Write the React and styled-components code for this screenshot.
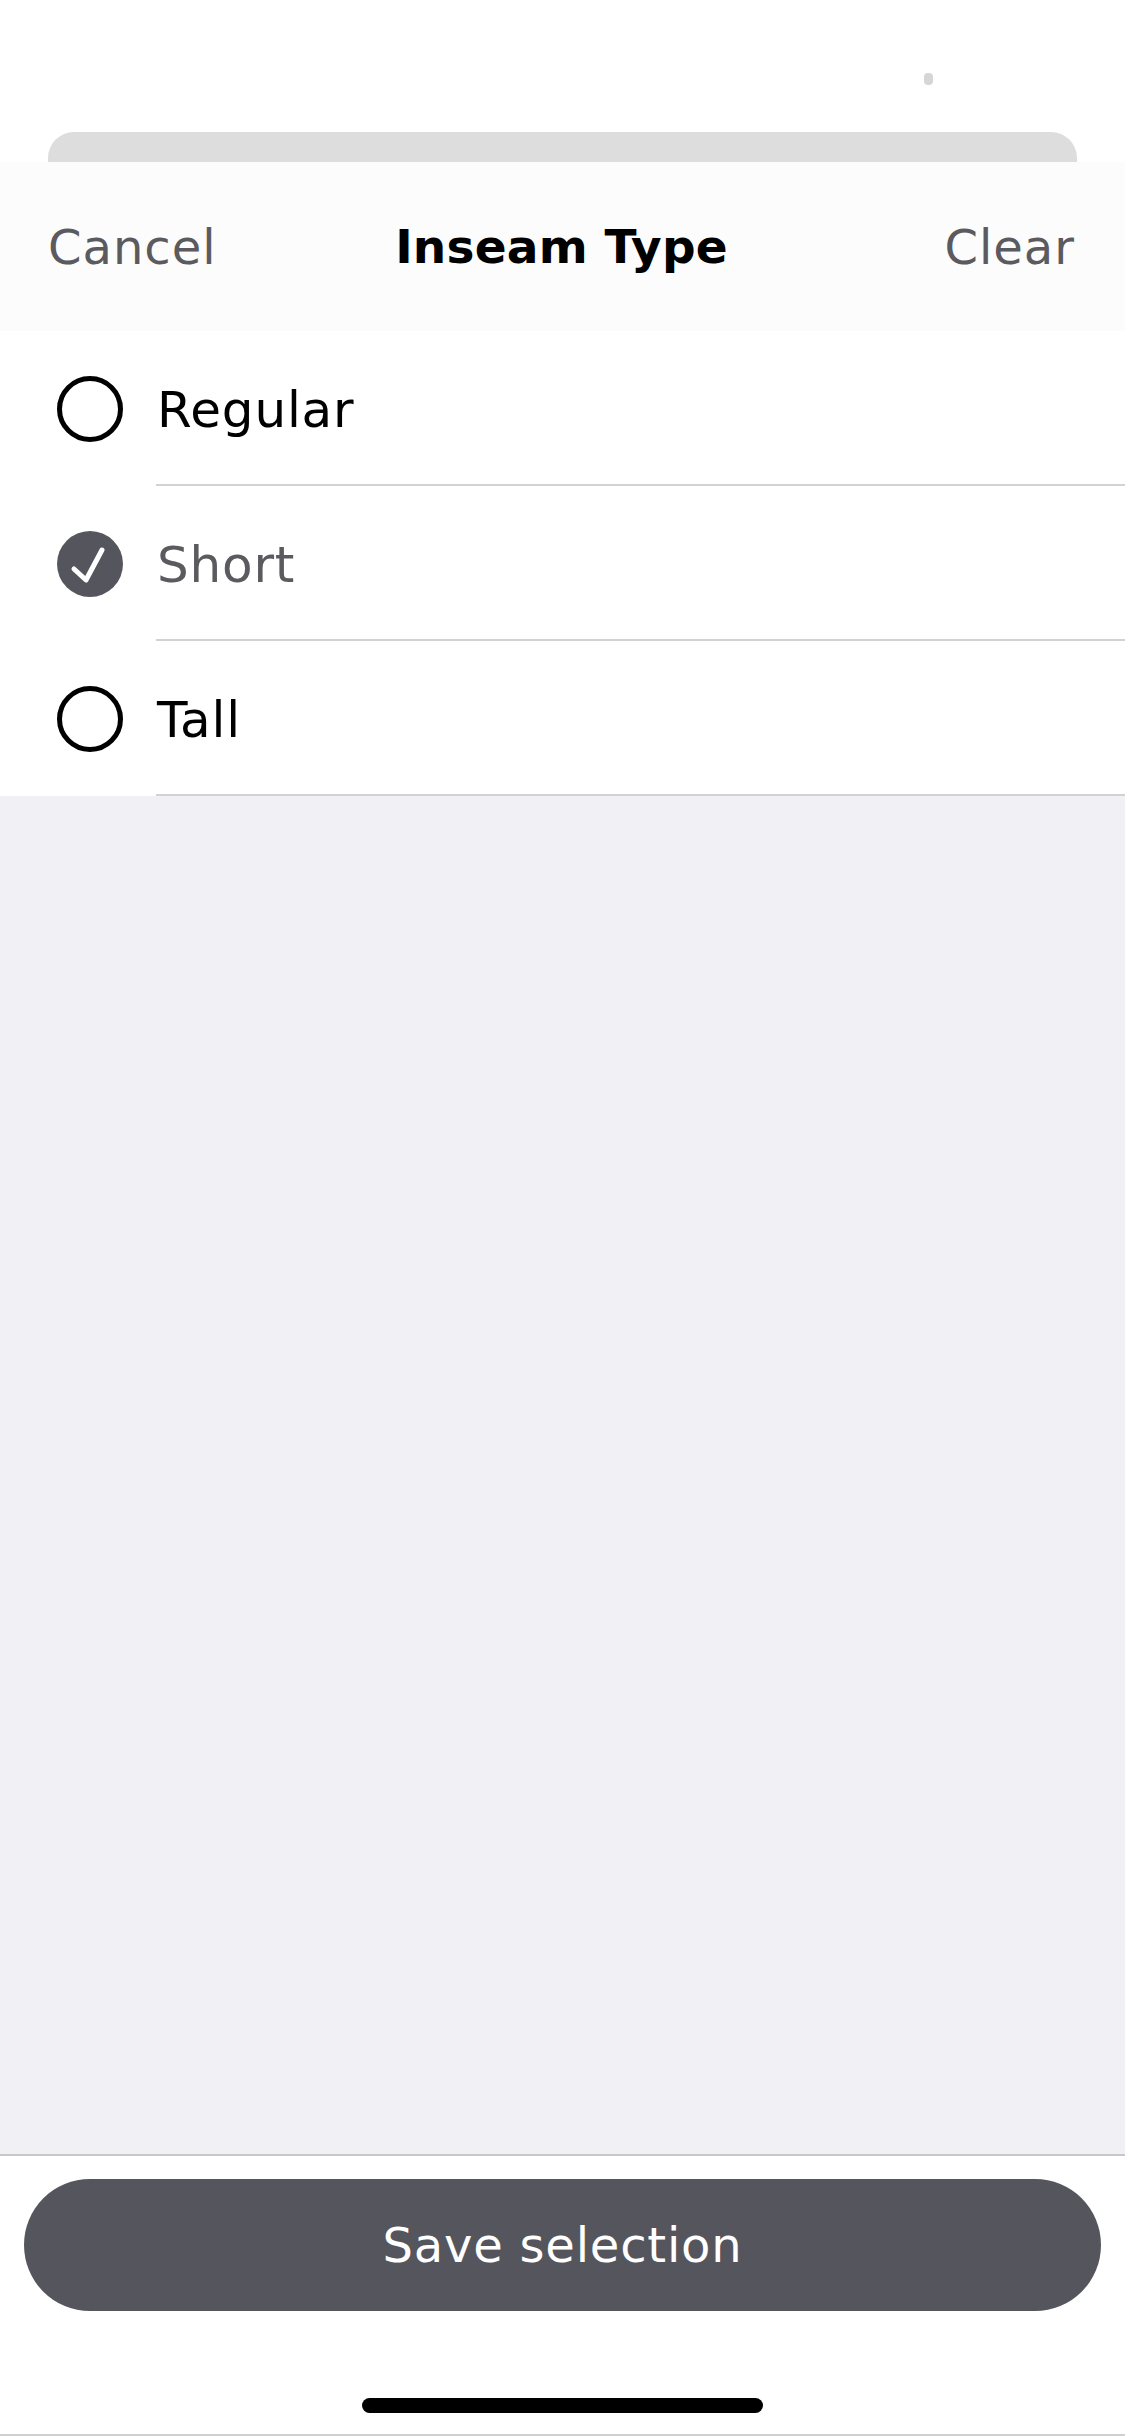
import React, { useState } from 'react';
import styled, { createGlobalStyle } from 'styled-components';

const GlobalStyle = createGlobalStyle`
  html, body {
    margin: 0;
    padding: 0;
    background: #ffffff;
  }
  #root {
    height: 2436px;
  }
`;

const Screen = styled.div`
  width: 1125px;
  height: 2436px;
  display: flex;
  flex-direction: column;
  background: #ffffff;
  font-family: 'DejaVu Sans', 'Noto Sans', sans-serif;
  overflow: hidden;
`;

const StatusBar = styled.div`
  height: 132px;
  box-sizing: border-box;
  display: flex;
  justify-content: flex-end;
  align-items: flex-start;
  padding: 73px 192px 0 0;
`;

const Dot = styled.div`
  width: 9px;
  height: 12px;
  border-radius: 4px;
  background: #d6d6d6;
`;

const PeekCard = styled.div`
  height: 30px;
  margin: 0 48px;
  background: #dddddd;
  border-radius: 26px 26px 0 0;
`;

const Header = styled.div`
  height: 169px;
  box-sizing: border-box;
  padding: 0 50px 0 48px;
  display: flex;
  align-items: center;
  justify-content: space-between;
  background: #fcfcfc;
`;

const HeaderAction = styled.button`
  border: none;
  background: none;
  padding: 0;
  font-family: inherit;
  font-size: 48px;
  letter-spacing: 1px;
  color: #5a5a5f;
  width: 220px;
  text-align: ${p => (p.$right ? 'right' : 'left')};
`;

const Title = styled.div`
  font-size: 47px;
  font-weight: bold;
  color: #000000;
  letter-spacing: 0.2px;
`;

const List = styled.div`
  background: #ffffff;
`;

const Row = styled.div`
  height: 155px;
  display: flex;
  align-items: center;
`;

const RadioCell = styled.div`
  width: 156px;
  height: 100%;
  box-sizing: border-box;
  padding-left: 57px;
  display: flex;
  align-items: center;
`;

const Label = styled.div`
  flex: 1;
  height: 100%;
  display: flex;
  align-items: center;
  box-sizing: border-box;
  padding: 4px 0 0 1px;
  border-bottom: 2px solid #d2d2d4;
  font-size: 50px;
  letter-spacing: 0.8px;
  color: ${p => (p.$checked ? '#5a5a5f' : '#000000')};
`;

const Filler = styled.div`
  flex: 1;
  background: #f0f0f5;
`;

const Footer = styled.div`
  height: 282px;
  box-sizing: border-box;
  border-top: 2px solid #c8c8cb;
  border-bottom: 2px solid #d0d0d0;
  background: #ffffff;
  display: flex;
  flex-direction: column;
  align-items: center;
  padding: 23px 24px 0;
`;

const SaveButton = styled.button`
  width: 100%;
  height: 132px;
  border: none;
  border-radius: 66px;
  background: #55555d;
  color: #ffffff;
  font-family: inherit;
  font-size: 48px;
  letter-spacing: 0.8px;
  padding: 0;
`;

const HomeIndicator = styled.div`
  width: 401px;
  height: 15px;
  margin-top: 87px;
  border-radius: 8px;
  background: #000000;
`;

const Radio = ({ checked }) =>
  checked ? (
    <svg width="66" height="66" viewBox="0 0 66 66">
      <circle cx="33" cy="33" r="33" fill="#55555d" />
      <path d="M17 38 L29 49 L45 19" fill="none" stroke="#ffffff" strokeWidth="5" strokeLinecap="round" strokeLinejoin="round" />
    </svg>
  ) : (
    <svg width="66" height="66" viewBox="0 0 66 66">
      <circle cx="33" cy="33" r="30.5" fill="none" stroke="#000000" strokeWidth="5" />
    </svg>
  );

const options = ['Regular', 'Short', 'Tall'];

export default function App() {
  const [selected, setSelected] = useState('Short');

  return (
    <>
      <GlobalStyle />
      <Screen>
        <StatusBar>
          <Dot />
        </StatusBar>
        <PeekCard />
        <Header>
          <HeaderAction>Cancel</HeaderAction>
          <Title>Inseam Type</Title>
          <HeaderAction $right onClick={() => setSelected(null)}>Clear</HeaderAction>
        </Header>
        <List>
          {options.map(o => (
            <Row key={o} onClick={() => setSelected(o)}>
              <RadioCell>
                <Radio checked={selected === o} />
              </RadioCell>
              <Label $checked={selected === o}>{o}</Label>
            </Row>
          ))}
        </List>
        <Filler />
        <Footer>
          <SaveButton>Save selection</SaveButton>
          <HomeIndicator />
        </Footer>
      </Screen>
    </>
  );
}
